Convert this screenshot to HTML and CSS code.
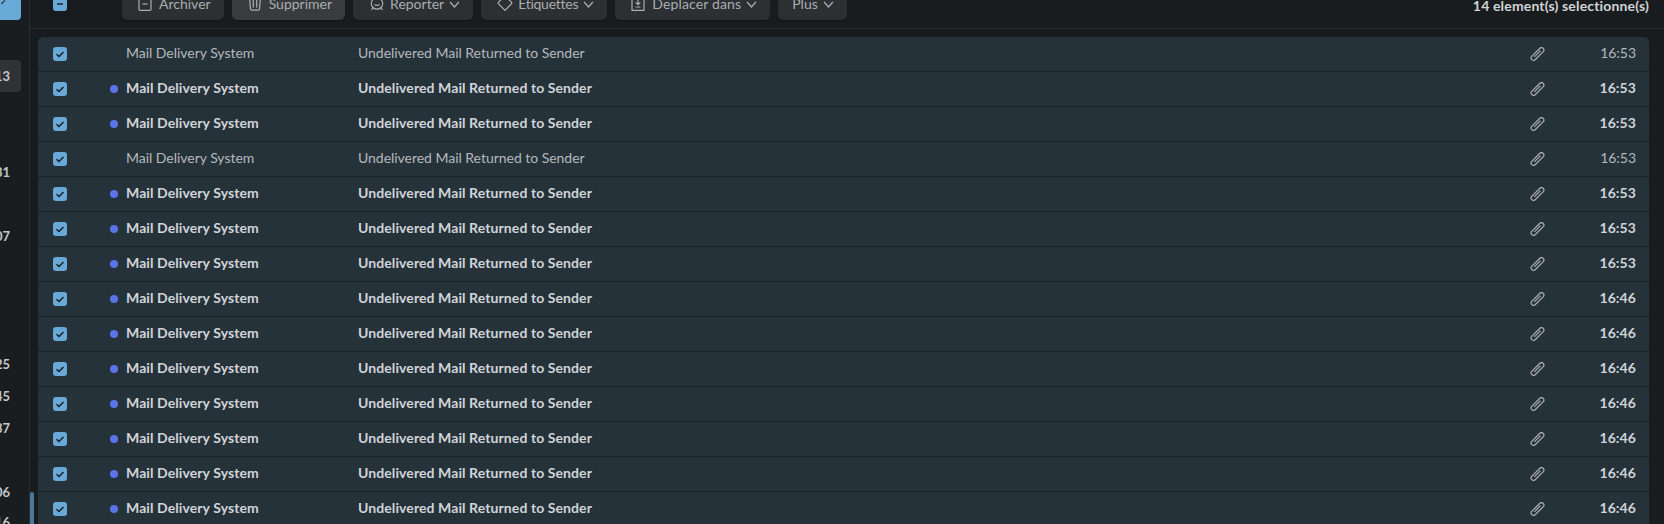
FILE: index.html
```html
<!DOCTYPE html>
<html lang="fr">
<head>
<meta charset="utf-8">
<title>Mail</title>
<link rel="stylesheet" href="styles.css">
</head>
<body>
<svg class="defs" width="0" height="0" aria-hidden="true">
  <symbol id="tick" viewBox="0 0 14 14"><path d="M3.5 7.2l2.500 2.300 4.500-4.500"/></symbol>
  <symbol id="clip" viewBox="1.500 1 13 12"><path d="M5.94 12.02L13.02 4.94A2.100 2.100 0 0 0 10.06 1.98L2.98 9.06A2.100 2.100 0 0 0 5.94 12.02M5.200 9.500L10.600 4.100"/></symbol>
  <symbol id="chev" viewBox="0 0 12 8"><path d="M1 1.200L6 6.800l5-5.600"/></symbol>
</svg>
<div class="app">
  <aside class="rail">
    <div class="compose"><span class="compose-tick"></span></div>
    <div class="counts">
      <span class="active-bg"></span>
      <span class="count count-a">13</span>
      <span class="count count-b">31</span>
      <span class="count count-c">07</span>
      <span class="count count-d">25</span>
      <span class="count count-e">45</span>
      <span class="count count-f">37</span>
      <span class="count count-g">06</span>
      <span class="count count-h">16</span>
    </div>
    <div class="scroll-thumb"></div>
  </aside>
  <main class="main">
    <header class="toolbar">
      <span class="check check-mixed"><svg viewBox="0 0 14 14"><path d="M4 7h6"/></svg></span>
      <div class="actions">
        <button class="btn"><svg class="ico" viewBox="0 0 14 14"><rect x="1" y="0.700" width="12" height="12.600" rx="1"/><path d="M4.500 7h5"/></svg>Archiver</button>
        <button class="btn btn-hover"><svg class="ico" viewBox="0 0 14 14"><path d="M1.500 0l1 12a1.300 1.300 0 0 0 1.300 1.200h6.400a1.300 1.300 0 0 0 1.300-1.200l1-12"/><path d="M5.300 2v8.500M8.700 2v8.500"/></svg>Supprimer</button>
        <button class="btn"><svg class="ico ico-wide" viewBox="0 0 16 14"><circle cx="8" cy="6.500" r="5.700"/><path d="M5.500 7.500c1.500 1 3.500 1 5 0M2.500 13l1.700-2.300M13.500 13l-1.700-2.300"/></svg>Reporter<svg class="chev"><use href="#chev"/></svg></button>
        <button class="btn btn-tight"><svg class="ico ico-wide" viewBox="0 0 16 14"><path d="M8 13.300L1.400 6.700a1.500 1.500 0 0 1 0-1.400L5.300 1.400h5.400l3.900 3.900a1.500 1.500 0 0 1 0 1.400z"/></svg>Etiquettes<svg class="chev"><use href="#chev"/></svg></button>
        <button class="btn btn-loose"><svg class="ico" viewBox="0 0 14 14"><path d="M4 .7H1v12.600h12V.7h-3M7 0v7.500M4.700 5.300L7 7.700l2.300-2.400M4.500 10h5"/></svg>Deplacer dans<svg class="chev"><use href="#chev"/></svg></button>
        <button class="btn btn-plain">Plus<svg class="chev"><use href="#chev"/></svg></button>
      </div>
      <span class="selected">14 element(s) selectionne(s)</span>
    </header>
    <section class="list">
      <div class="row"><span class="check"><svg><use href="#tick"/></svg></span><span class="dot"></span><span class="from">Mail Delivery System</span><span class="subject">Undelivered Mail Returned to Sender</span><svg class="clip"><use href="#clip"/></svg><span class="time">16:53</span></div>
      <div class="row unread"><span class="check"><svg><use href="#tick"/></svg></span><span class="dot"></span><span class="from">Mail Delivery System</span><span class="subject">Undelivered Mail Returned to Sender</span><svg class="clip"><use href="#clip"/></svg><span class="time">16:53</span></div>
      <div class="row unread"><span class="check"><svg><use href="#tick"/></svg></span><span class="dot"></span><span class="from">Mail Delivery System</span><span class="subject">Undelivered Mail Returned to Sender</span><svg class="clip"><use href="#clip"/></svg><span class="time">16:53</span></div>
      <div class="row"><span class="check"><svg><use href="#tick"/></svg></span><span class="dot"></span><span class="from">Mail Delivery System</span><span class="subject">Undelivered Mail Returned to Sender</span><svg class="clip"><use href="#clip"/></svg><span class="time">16:53</span></div>
      <div class="row unread"><span class="check"><svg><use href="#tick"/></svg></span><span class="dot"></span><span class="from">Mail Delivery System</span><span class="subject">Undelivered Mail Returned to Sender</span><svg class="clip"><use href="#clip"/></svg><span class="time">16:53</span></div>
      <div class="row unread"><span class="check"><svg><use href="#tick"/></svg></span><span class="dot"></span><span class="from">Mail Delivery System</span><span class="subject">Undelivered Mail Returned to Sender</span><svg class="clip"><use href="#clip"/></svg><span class="time">16:53</span></div>
      <div class="row unread"><span class="check"><svg><use href="#tick"/></svg></span><span class="dot"></span><span class="from">Mail Delivery System</span><span class="subject">Undelivered Mail Returned to Sender</span><svg class="clip"><use href="#clip"/></svg><span class="time">16:53</span></div>
      <div class="row unread"><span class="check"><svg><use href="#tick"/></svg></span><span class="dot"></span><span class="from">Mail Delivery System</span><span class="subject">Undelivered Mail Returned to Sender</span><svg class="clip"><use href="#clip"/></svg><span class="time">16:46</span></div>
      <div class="row unread"><span class="check"><svg><use href="#tick"/></svg></span><span class="dot"></span><span class="from">Mail Delivery System</span><span class="subject">Undelivered Mail Returned to Sender</span><svg class="clip"><use href="#clip"/></svg><span class="time">16:46</span></div>
      <div class="row unread"><span class="check"><svg><use href="#tick"/></svg></span><span class="dot"></span><span class="from">Mail Delivery System</span><span class="subject">Undelivered Mail Returned to Sender</span><svg class="clip"><use href="#clip"/></svg><span class="time">16:46</span></div>
      <div class="row unread"><span class="check"><svg><use href="#tick"/></svg></span><span class="dot"></span><span class="from">Mail Delivery System</span><span class="subject">Undelivered Mail Returned to Sender</span><svg class="clip"><use href="#clip"/></svg><span class="time">16:46</span></div>
      <div class="row unread"><span class="check"><svg><use href="#tick"/></svg></span><span class="dot"></span><span class="from">Mail Delivery System</span><span class="subject">Undelivered Mail Returned to Sender</span><svg class="clip"><use href="#clip"/></svg><span class="time">16:46</span></div>
      <div class="row unread"><span class="check"><svg><use href="#tick"/></svg></span><span class="dot"></span><span class="from">Mail Delivery System</span><span class="subject">Undelivered Mail Returned to Sender</span><svg class="clip"><use href="#clip"/></svg><span class="time">16:46</span></div>
      <div class="row unread"><span class="check"><svg><use href="#tick"/></svg></span><span class="dot"></span><span class="from">Mail Delivery System</span><span class="subject">Undelivered Mail Returned to Sender</span><svg class="clip"><use href="#clip"/></svg><span class="time">16:46</span></div>
    </section>
  </main>
</div>
</body>
</html>
```
FILE: styles.css
```css
* { box-sizing: border-box; }
html, body { margin: 0; height: 100%; overflow: hidden; }
body { background: #191c1f; color: #c8ccd0; font: 14px/1 Lato, "Liberation Sans", sans-serif; }
.app { display: flex; height: 524px; overflow: hidden; }
.defs { position: absolute; }

.rail { position: relative; width: 30px; flex: none; background: #1a1d20; border-right: 1px solid #2b2f33; }
.compose { position: absolute; left: -30px; top: -10px; width: 51px; height: 30px; background: #68a9d8; border-radius: 4px; }
.compose-tick { position: absolute; left: 30px; top: 10px; width: 5px; height: 3px; border-bottom: 1.5px solid #1c2024; transform: rotate(-45deg); }
.counts { position: absolute; left: 0; top: 0; width: 29px; height: 100%; overflow: hidden; }
.active-bg { position: absolute; left: -9px; top: 60px; width: 30px; height: 32px; background: #2f3336; border-radius: 4px; }
.count { position: absolute; left: -7px; width: 17px; text-align: right; font-size: 13px; font-weight: 700; color: #c4c8cc; }
.count-a { top: 70px; }
.count-b { top: 166px; }
.count-c { top: 230px; }
.count-d { top: 358px; }
.count-e { top: 390px; }
.count-f { top: 422px; }
.count-g { top: 486px; }
.count-h { top: 516px; }
.scroll-thumb { position: absolute; left: 30px; top: 492px; width: 4px; height: 32px; background: #4a7898; border-radius: 2px 2px 0 0; z-index: 1; }

.main { flex: 1; min-width: 0; display: flex; flex-direction: column; }
.toolbar { height: 29px; flex: none; display: flex; align-items: flex-start; padding-left: 23px; padding-right: 15px; border-bottom: 1px solid #2b2f33; }
.check-mixed { margin-top: -3px; }
.actions { display: flex; gap: 8px; margin-left: 55px; margin-top: -12px; }
.btn { height: 32px; padding: 0 13px 0 16px; display: flex; align-items: center; border: 0; border-radius: 5px; background: #2c3033; color: #a9adb1; font: inherit; box-shadow: 0 1px 1px rgba(0,0,0,.35); }
.btn-hover { background: #383c3f; }
.btn-tight { letter-spacing: -.25px; }
.btn-loose { letter-spacing: .15px; }
.btn-plain { padding-left: 14px; }
.ico { width: 14px; height: 14px; margin-right: 7px; fill: none; stroke: #a9adb1; stroke-width: 1.200; }
.ico-wide { width: 16px; margin-right: 5px; }
.chev { width: 11px; height: 7px; margin-left: 5px; fill: none; stroke: #a9adb1; stroke-width: 1.500; }
.selected { margin-left: auto; margin-top: -1px; font-weight: 700; color: #d0d4d7; letter-spacing: .16px; }

.check { width: 14px; height: 14px; flex: none; display: inline-flex; background: #68a9d8; border-radius: 3px; }
.check svg { width: 14px; height: 14px; fill: none; stroke: #1c2024; stroke-width: 1.500; }

.list { margin: 8px 15px 0 8px; background: #26323a; border-radius: 5px 5px 0 0; }
.row { height: 35px; display: flex; align-items: center; padding-left: 15px; border-bottom: 1px solid #1d2226; color: #b4b8bc; letter-spacing: -.03px; }
.row > span:not(.check):not(.dot) { position: relative; top: -1px; }
.dot { width: 8px; height: 8px; margin-left: 43px; flex: none; border-radius: 50%; }
.from { width: 232px; margin-left: 8px; flex: none; white-space: nowrap; }
.subject { flex: 1; white-space: nowrap; }
.unread { color: #d0d4d8; font-weight: 700; letter-spacing: .09px; }
.unread .dot { background: #5a73ea; }
.clip { width: 15px; height: 14px; margin-left: 1px; flex: none; fill: none; stroke: #a9adb1; stroke-width: 1.100; }
.time { width: 104px; padding-right: 13px; text-align: right; flex: none; }
```
